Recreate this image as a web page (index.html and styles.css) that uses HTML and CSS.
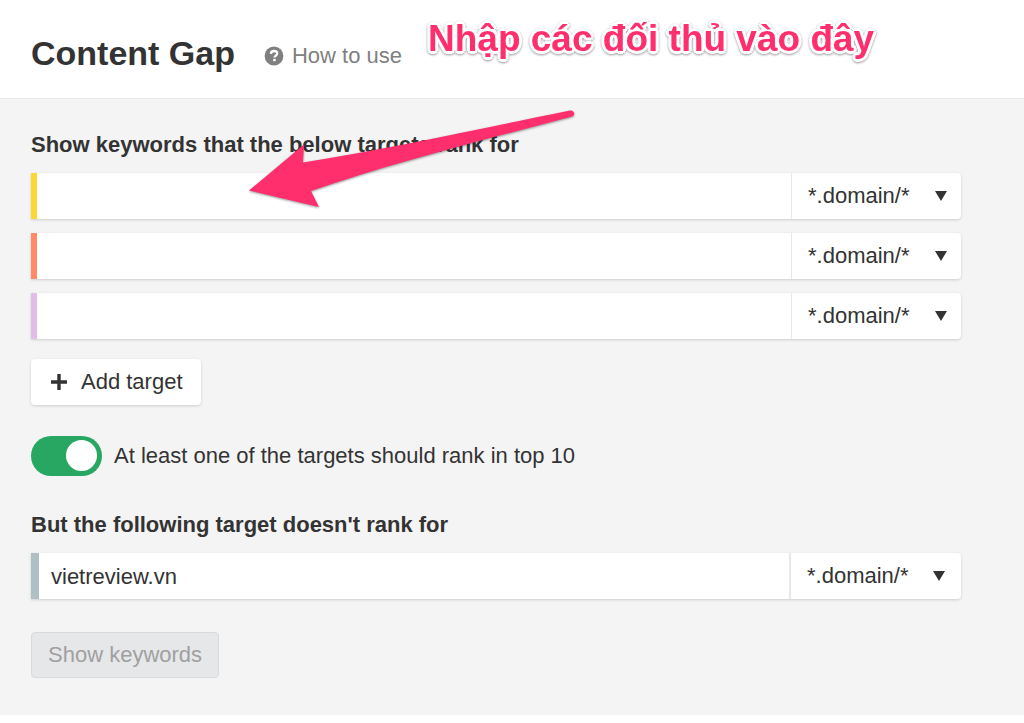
FILE: index.html
```html
<!DOCTYPE html>
<html lang="en">
  <head>
    <meta charset="UTF-8" />
    <meta name="viewport" content="width=device-width, initial-scale=1.0" />
    <title>Content Gap</title>
    <link rel="stylesheet" href="styles.css">
  </head>
  <body>
    <!-- Header -->
    <header>
      <h1>Content Gap</h1>
      <a href="#" class="help">
        <svg width="20" height="20" viewBox="0 0 20 20" aria-hidden="true">
          <circle cx="10" cy="10" r="9.4" fill="#808080" />
          <path d="M6.9 7.9C7 5.9 8.3 5 10.1 5s3.1 1 3.1 2.6c0 1.900-2.700 2-2.700 4" fill="none" stroke="#fff" stroke-width="2.3" />
          <rect x="9.2" y="12.9" width="2.5" height="2.3" fill="#fff" />
        </svg>
        How to use
      </a>
      <p class="note" lang="vi">Nhập các đối thủ vào đây</p>
    </header>

    <main>
      <form action="#">
        <!-- Competitors -->
        <h2>Show keywords that the below targets rank for</h2>
        <div class="targets">
          <div class="target yellow">
            <input type="text" aria-label="Target 1">
            <div class="mode">
              <select aria-label="Target 1 mode"><option>*.domain/*</option></select>
            </div>
          </div>
          <div class="target orange">
            <input type="text" aria-label="Target 2">
            <div class="mode">
              <select aria-label="Target 2 mode"><option>*.domain/*</option></select>
            </div>
          </div>
          <div class="target purple">
            <input type="text" aria-label="Target 3">
            <div class="mode">
              <select aria-label="Target 3 mode"><option>*.domain/*</option></select>
            </div>
          </div>
          <svg class="arrow" width="328" height="102" viewBox="0 0 328 102" aria-hidden="true">
            <path d="M1 80.500L56 34.500L55 52.500C140 39 225 20 322 .500C326 0 328 5 324 6.500C235 30 140 54 63 81L71 97Z" fill="#ff2f6d" />
          </svg>
        </div>

        <button type="button" class="add">
          <svg width="18" height="18" viewBox="0 0 18 18" aria-hidden="true">
            <path d="M9 1v16M1 9h16" stroke="#333" stroke-width="3.4" />
          </svg>
          Add target
        </button>

        <div class="switch">
          <input type="checkbox" id="top10" checked>
          <label for="top10">At least one of the targets should rank in top 10</label>
        </div>

        <!-- Own site -->
        <h2>But the following target doesn't rank for</h2>
        <div class="target own">
          <input type="text" value="vietreview.vn" aria-label="Your target">
          <div class="mode">
            <select aria-label="Your target mode"><option>*.domain/*</option></select>
          </div>
        </div>

        <button type="submit" class="submit" disabled>Show keywords</button>
      </form>
    </main>
  </body>
</html>
```
FILE: styles.css
```css
:root {
  --bg-page: #f4f4f4;
  --text-primary: #333333;
  --text-muted: #808080;
  --border-color: #e8e8e8;
  --note-color: #ff2f6d;
  --shadow: 0 1px 3px rgba(0, 0, 0, 0.16);
}

* {
  margin: 0;
  padding: 0;
  box-sizing: border-box;
}

body,
input,
select,
button {
  font-family: "Liberation Sans", Arial, sans-serif;
  font-size: 22px;
  color: var(--text-primary);
}

body {
  background-color: #fff;
}

/* Header */
header {
  position: relative;
  display: flex;
  align-items: center;
  gap: 29px;
  padding: 29px 31px 21px;
  border-bottom: 1px solid var(--border-color);
}

h1 {
  font-size: 34px;
  line-height: 48px;
}

.help {
  display: flex;
  align-items: center;
  gap: 8px;
  padding-top: 6px;
  color: var(--text-muted);
  text-decoration: none;
}

.note {
  position: absolute;
  top: 17px;
  left: 428px;
  font-size: 37px;
  font-weight: 700;
  line-height: 44px;
  white-space: nowrap;
  color: var(--note-color);
  text-shadow:
    3px 0 #fff,
    -3px 0 #fff,
    0 3px #fff,
    0 -3px #fff,
    2px 2px #fff,
    -2px 2px #fff,
    2px -2px #fff,
    -2px -2px #fff;
  filter: drop-shadow(0 1px 1px rgba(0, 0, 0, 0.4));
}

/* Form */
main {
  padding: 34px 63px 37px 31px;
  background-color: var(--bg-page);
}

h2 {
  font-size: 22px;
  line-height: 24px;
  margin-bottom: 16px;
}

.targets {
  position: relative;
  display: flex;
  flex-direction: column;
  gap: 14px;
}

.target {
  display: flex;
  height: 46px;
  background-color: #fff;
  border-left: 6px solid;
  border-radius: 0 4px 4px 0;
  box-shadow: var(--shadow);
}

.yellow {
  border-left-color: #fdd835;
}

.orange {
  border-left-color: #ff8a65;
}

.purple {
  border-left-color: #e1bee7;
}

.own {
  border-left: 8px solid #b0bec5;
}

.target input {
  flex: 1;
  min-width: 0;
  padding: 2px 12px 0;
  border: none;
  outline: none;
  background: none;
}

.mode {
  position: relative;
  width: 170px;
  border-left: 1px solid var(--border-color);
}

.own .mode {
  width: 172px;
  border-left-width: 2px;
}

.mode select {
  width: 100%;
  height: 100%;
  padding: 0 40px 2px 16px;
  border: none;
  outline: none;
  background: none;
  appearance: none;
}

.mode::after {
  content: "";
  position: absolute;
  top: 18px;
  right: 14px;
  width: 12px;
  height: 10px;
  background-color: var(--text-primary);
  clip-path: polygon(0 0, 100% 0, 50% 100%);
  pointer-events: none;
}

.own .mode::after {
  right: 16px;
}

.arrow {
  position: absolute;
  top: -63px;
  left: 217px;
  overflow: visible;
  filter: drop-shadow(0 1px 1px rgba(0, 0, 0, 0.4));
  pointer-events: none;
}

button {
  height: 46px;
  border-radius: 4px;
}

.add {
  display: flex;
  align-items: center;
  gap: 13px;
  margin-top: 20px;
  padding: 0 18px 0 19px;
  border: none;
  background-color: #fff;
  box-shadow: var(--shadow);
}

.switch {
  display: flex;
  align-items: center;
  gap: 12px;
  margin: 31px 0 37px;
}

.switch input {
  width: 71px;
  height: 40px;
  padding: 4px 5px;
  border-radius: 20px;
  background-color: #27a762;
  appearance: none;
}

.switch input::before {
  content: "";
  display: block;
  width: 31px;
  height: 31px;
  border-radius: 50%;
  background-color: #fff;
}

.switch input:checked::before {
  margin-left: auto;
}

.submit {
  margin-top: 33px;
  padding: 0 16px;
  border: 1px solid #d8dade;
  background-color: #e6e7e9;
  color: #a0a0a0;
}
```
